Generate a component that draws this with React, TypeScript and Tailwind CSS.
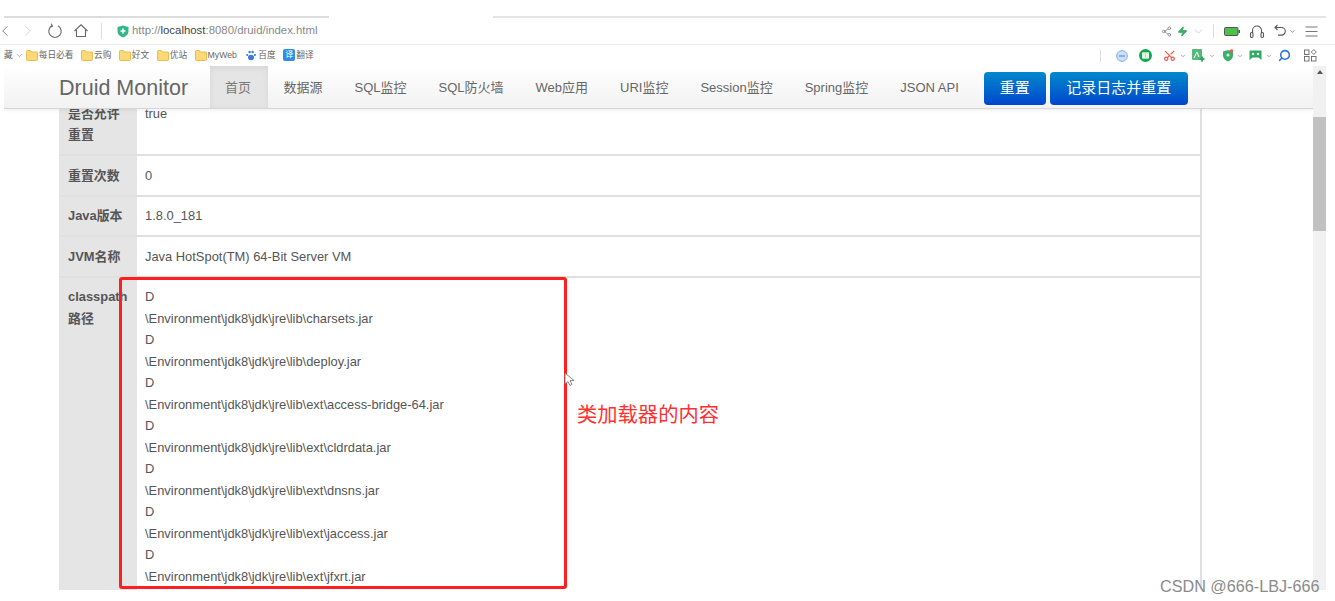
import { ChevronDown, ChevronLeft, ChevronRight, Search, Scissors, Share2, Zap } from 'lucide-react';

const font = { sans: 'font-["Liberation_Sans","Noto_Sans_CJK_SC",sans-serif]' };

const bookmarks = ['每日必看', '云购', '好文', '优站', 'MyWeb'];
const tabs = ['首页', '数据源', 'SQL监控', 'SQL防火墙', 'Web应用', 'URI监控', 'Session监控', 'Spring监控', 'JSON API'];
const rows = [
  { label: ['是否允许', '重置'], value: 'true' },
  { label: ['重置次数'], value: '0' },
  { label: ['Java版本'], value: '1.8.0_181' },
  { label: ['JVM名称'], value: 'Java HotSpot(TM) 64-Bit Server VM' }
];
const jars = ['charsets.jar', 'deploy.jar', 'ext\\access-bridge-64.jar', 'ext\\cldrdata.jar', 'ext\\dnsns.jar', 'ext\\jaccess.jar', 'ext\\jfxrt.jar'];

function Folder() {
  return (
    <svg width="12" height="11" viewBox="0 0 12 11" className="shrink-0">
      <path d="M0.5 1.5a1 1 0 0 1 1-1h2.800l1.200 1.500h5.500a.5.5 0 0 1 .5.5v7a1 1 0 0 1-1 1h-9a1 1 0 0 1-1-1z" fill="#fcd877" stroke="#e2ae3c" strokeWidth="0.800" />
    </svg>
  );
}

function Dot() {
  return <ChevronDown size={6} strokeWidth={3} className="text-[#888]" />;
}

function BrowserChrome() {
  return (
    <div className="text-[#888]">
      <div className="flex h-[18px] items-end pl-1">
        <div className="h-[2px] w-[325px] bg-[#dcdcdc]" />
        <div className="w-[164px]" />
        <div className="h-[2px] w-[833px] bg-[#e4e4e4]" />
      </div>
      <div className="flex h-[27px] items-center border-b border-[#ececec] pl-1 pr-4">
        <ChevronLeft size={18} strokeWidth={1.200} className="-ml-2 text-[#777]" />
        <ChevronRight size={18} strokeWidth={1} className="ml-[5px] text-[#c4c4c4]" />
        <svg width="16" height="16" viewBox="0 0 16 16" fill="none" stroke="#666" strokeWidth="1.100" className="ml-[10px]">
          <path d="M5 2.800a6.200 6.200 0 1 0 6 0" />
          <path d="M4.200 0.800 5.400 3.200 3 4.200" />
        </svg>
        <svg width="16" height="16" viewBox="0 0 16 16" fill="none" stroke="#666" strokeWidth="1.100" className="ml-[10px]">
          <path d="M1.500 8 8 1.800 14.500 8M3.500 7v6.500h9V7" />
        </svg>
        <div className="ml-3 h-[16px] w-px bg-[#ddd]" />
        <svg width="12" height="13" viewBox="0 0 12 13" className="ml-[15px]">
          <path d="M6 0.500 11.500 2v4.500c0 3-2.500 5-5.500 6-3-1-5.500-3-5.500-6V2z" fill="#37b58a" />
          <path d="M6 3.500v5M3.500 6h5" stroke="#fff" strokeWidth="1.600" />
        </svg>
        <span className={`ml-[3px] text-[11.400px] ${font.sans}`}>
          http://<span className="text-[#444]">localhost</span>:8080/druid/index.html
        </span>
        <div className="ml-auto flex items-center">
          <Share2 size={11} strokeWidth={1.500} className="text-[#777]" />
          <Zap size={11} className="ml-[5px] fill-[#3fae6a] text-[#3fae6a]" />
          <ChevronDown size={13} strokeWidth={1} className="ml-1 text-[#aaa]" />
          <div className="ml-2 h-[14px] w-px bg-[#ddd]" />
          <svg width="16" height="9" viewBox="0 0 16 9" className="ml-[10px]">
            <rect x="0.500" y="0.500" width="13.500" height="8" rx="1" fill="#4cc04c" stroke="#555" />
            <rect x="14.500" y="3" width="1.500" height="3" fill="#555" />
          </svg>
          <svg width="16" height="15" viewBox="0 0 16 15" fill="none" stroke="#555" strokeWidth="1.100" className="ml-[9px]">
            <path d="M3.500 9V6.500a4.500 4.500 0 0 1 9 0V9" />
            <rect x="1.500" y="8.500" width="2.500" height="5" rx="1.200" />
            <rect x="12" y="8.500" width="2.500" height="5" rx="1.200" />
          </svg>
          <svg width="14" height="14" viewBox="0 0 14 14" fill="none" stroke="#555" strokeWidth="1.100" className="ml-2">
            <path d="M2.500 3.500h6a3.800 3.800 0 0 1 0 7.600H5" />
            <path d="M4.500 1 2 3.500 4.500 6" />
          </svg>
          <ChevronDown size={7} strokeWidth={3} className="ml-[2px] text-[#888]" />
          <svg width="15" height="13" viewBox="0 0 15 13" stroke="#777" strokeWidth="1.100" className="ml-2">
            <path d="M1.500 2h12M1.500 6.500h12M1.500 11h12" />
          </svg>
        </div>
      </div>
      <div className="flex h-[21px] items-center pl-1 pr-[18px]">
        <span className={`text-[8.700px] text-[#666] ${font.sans}`}>藏</span>
        <ChevronDown size={9} className="ml-[2px] text-[#999]" />
        <div className={`ml-[2px] flex items-center gap-[7.500px] text-[8.700px] text-[#666] ${font.sans}`}>
          {bookmarks.map((b) => (
            <span key={b} className="flex items-center gap-px">
              <Folder />
              {b}
            </span>
          ))}
          <span className="ml-[2px] flex items-center gap-[2px]">
            <svg width="10" height="11" viewBox="0 0 10 11">
              <ellipse cx="5" cy="7.500" rx="3" ry="2.800" fill="#3a7ae0" />
              <circle cx="1.200" cy="5" r="1.100" fill="#3a7ae0" />
              <circle cx="3.600" cy="2" r="1.200" fill="#3a7ae0" />
              <circle cx="6.600" cy="2" r="1.200" fill="#3a7ae0" />
              <circle cx="8.900" cy="5" r="1.100" fill="#3a7ae0" />
            </svg>
            百度
          </span>
          <span className="flex items-center gap-px">
            <span className="flex h-[12px] w-[12px] items-center justify-center rounded-[2px] bg-[#2c8ee8] text-[8px] text-white">译</span>
            翻译
          </span>
        </div>
        <div className="ml-auto flex items-center">
          <div className="h-[12px] w-px bg-[#ddd]" />
          <svg width="12" height="12" viewBox="0 0 12 12" className="ml-[15px]">
            <circle cx="6" cy="6" r="5.400" fill="#cfe0f5" stroke="#7fb0e6" />
            <path d="M3 6h6" stroke="#6a9ad8" strokeWidth="1.400" />
          </svg>
          <svg width="13" height="13" viewBox="0 0 13 13" className="ml-[11px]">
            <circle cx="6.500" cy="6.500" r="6.500" fill="#16a84e" />
            <rect x="3" y="3.200" width="7" height="6.600" rx="1" fill="#e6f5e9" />
            <path d="M6.500 3.500v6" stroke="#8fd4a6" strokeWidth="0.700" />
          </svg>
          <Scissors size={13} strokeWidth={2.200} className="ml-[11px] -rotate-90 text-[#ee5a4c]" />
          <div className="ml-1"><Dot /></div>
          <svg width="13" height="13" viewBox="0 0 13 13" className="ml-[6px]">
            <rect x="0" y="0" width="10" height="11" rx="1" fill="#55b97a" />
            <path d="M2 9 5 3l2 5" stroke="#fff" fill="none" />
            <path d="M10 7.500v5M7.500 10h5" stroke="#2fa866" strokeWidth="2" />
          </svg>
          <div className="ml-1"><Dot /></div>
          <svg width="12" height="13" viewBox="0 0 12 13" className="ml-[7px]">
            <path d="M6 1 11 2.500v4c0 3-2.200 5-5 6-2.800-1-5-3-5-6v-4z" fill="#3cae6c" />
            <circle cx="6" cy="6" r="1.600" fill="#d9f2e2" />
            <circle cx="9.500" cy="2" r="1.800" fill="#e8604c" />
          </svg>
          <div className="ml-[3px]"><Dot /></div>
          <svg width="13" height="11" viewBox="0 0 13 11" className="ml-[6px]">
            <path d="M1.500 0.500h10a1 1 0 0 1 1 1v8.500l-3-2.500h-6l-3 2.500V1.500a1 1 0 0 1 1-1z" fill="#2fa866" />
            <circle cx="4" cy="4" r="1.300" fill="#dff2e2" />
            <circle cx="9" cy="4" r="1.300" fill="#dff2e2" />
          </svg>
          <div className="ml-1"><Dot /></div>
          <Search size={13} strokeWidth={2.800} className="ml-[6px] -scale-x-100 text-[#2a77d8]" />
          <svg width="13" height="13" viewBox="0 0 13 13" fill="none" stroke="#666" strokeWidth="0.900" className="ml-[13px]">
            <rect x="0.500" y="1" width="4.500" height="4.500" />
            <rect x="0.500" y="7.500" width="4.500" height="4.500" />
            <rect x="7.500" y="7.500" width="4.500" height="4.500" />
            <path d="M9.800 0.500 12.300 3 9.800 5.500 7.300 3z" />
          </svg>
        </div>
      </div>
    </div>
  );
}

function Navbar() {
  return (
    <nav className={`relative z-10 flex h-[43px] items-stretch border-b border-[#d6d6d6] bg-gradient-to-b from-white to-[#f2f2f2] pl-[55px] shadow-[0_1px_4px_rgba(0,0,0,0.08)] ${font.sans}`}>
      <div className="mt-[2px] w-[151px] self-center text-[21.500px] text-[#666]">Druid Monitor</div>
      <ul className="flex items-stretch text-[13px] text-[#666]">
        {tabs.map((t, i) => (
          <li key={t} className={i === 0 ? 'flex items-center bg-[#e5e5e5] pl-[15px] pr-[16.500px] pt-[2px] text-[#777] shadow-[inset_0_2px_6px_rgba(0,0,0,0.07)]' : 'flex items-center px-4 pt-[2px]'}>
            {t}
          </li>
        ))}
      </ul>
      <div className="ml-[9px] flex items-start gap-1 pt-[6px] text-[15px] text-white">
        <button className="h-[33px] w-[62px] rounded bg-gradient-to-b from-[#0088cc] to-[#0044cc]">重置</button>
        <button className="h-[33px] w-[138px] rounded bg-gradient-to-b from-[#0088cc] to-[#0044cc]">记录日志并重置</button>
      </div>
    </nav>
  );
}

function InfoTable() {
  return (
    <table className={`-mt-[15px] ml-[55px] w-[1143px] table-fixed border-collapse text-[12.900px] leading-[21.500px] text-[#555] ${font.sans}`}>
      <colgroup>
        <col className="w-[78px]" />
        <col />
      </colgroup>
      <tbody>
        {rows.map((r) => (
          <tr key={r.value} className="border-b-2 border-[#e0e0e0]">
            <th className="bg-[#e5e5e5] px-[9px] py-[8.500px] text-left align-top font-bold">
              {r.label.map((l) => (
                <div key={l}>{l}</div>
              ))}
            </th>
            <td className="border-r-2 border-[#e0e0e0] px-2 py-[8.500px] align-top">
              {r.value}
              {r.label.length > 1 && <div>&nbsp;</div>}
            </td>
          </tr>
        ))}
        <tr>
          <th className="bg-[#e5e5e5] px-[9px] py-[8.500px] text-left align-top font-bold">
            <div className="whitespace-nowrap">classpath</div>
            <div>路径</div>
          </th>
          <td className="border-r-2 border-[#e0e0e0] px-2 py-[8.500px] align-top">
            {jars.map((j) => (
              <div key={j}>
                <div>D</div>
                <div>{'\\Environment\\jdk8\\jdk\\jre\\lib\\' + j}</div>
              </div>
            ))}
          </td>
        </tr>
      </tbody>
    </table>
  );
}

function Scrollbar() {
  return (
    <div className="flex w-[13px] shrink-0 flex-col items-center bg-[#f1f1f1]">
      <div className="mt-[4px] h-0 w-0 border-x-[3px] border-b-[4px] border-x-transparent border-b-[#555]" />
      <div className="mt-[43px] h-[114px] w-full bg-[#c1c1c1]" />
    </div>
  );
}

export default function App() {
  return (
    <div className="relative h-[601px] w-[1335px] overflow-hidden bg-white">
      <BrowserChrome />
      <div className="flex h-[524px] pl-1 pr-[9px]">
        <div className="min-w-0 flex-1 overflow-hidden">
          <Navbar />
          <InfoTable />
        </div>
        <Scrollbar />
      </div>

      {/* annotations on top of the screenshot */}
      <div className="absolute left-[119px] top-[277px] h-[312px] w-[448px] rounded-[3px] border-[3px] border-[#ff1f1f]" />
      <svg width="11" height="15" viewBox="0 0 11 15" className="absolute left-[564px] top-[372px]">
        <path d="M1 1v11l3-2.500 2 4 2-1-2-4h4z" fill="#fff" stroke="#777" strokeWidth="0.900" />
      </svg>
      <span className={`absolute left-[577px] top-[402px] text-[20.300px] leading-[27px] text-[#ff3030] ${font.sans}`}>类加载器的内容</span>
      <span className={`absolute left-[1160px] top-[577px] text-[16.200px] leading-[18px] text-[#8a8a8a] ${font.sans}`}>CSDN @666-LBJ-666</span>
    </div>
  );
}
